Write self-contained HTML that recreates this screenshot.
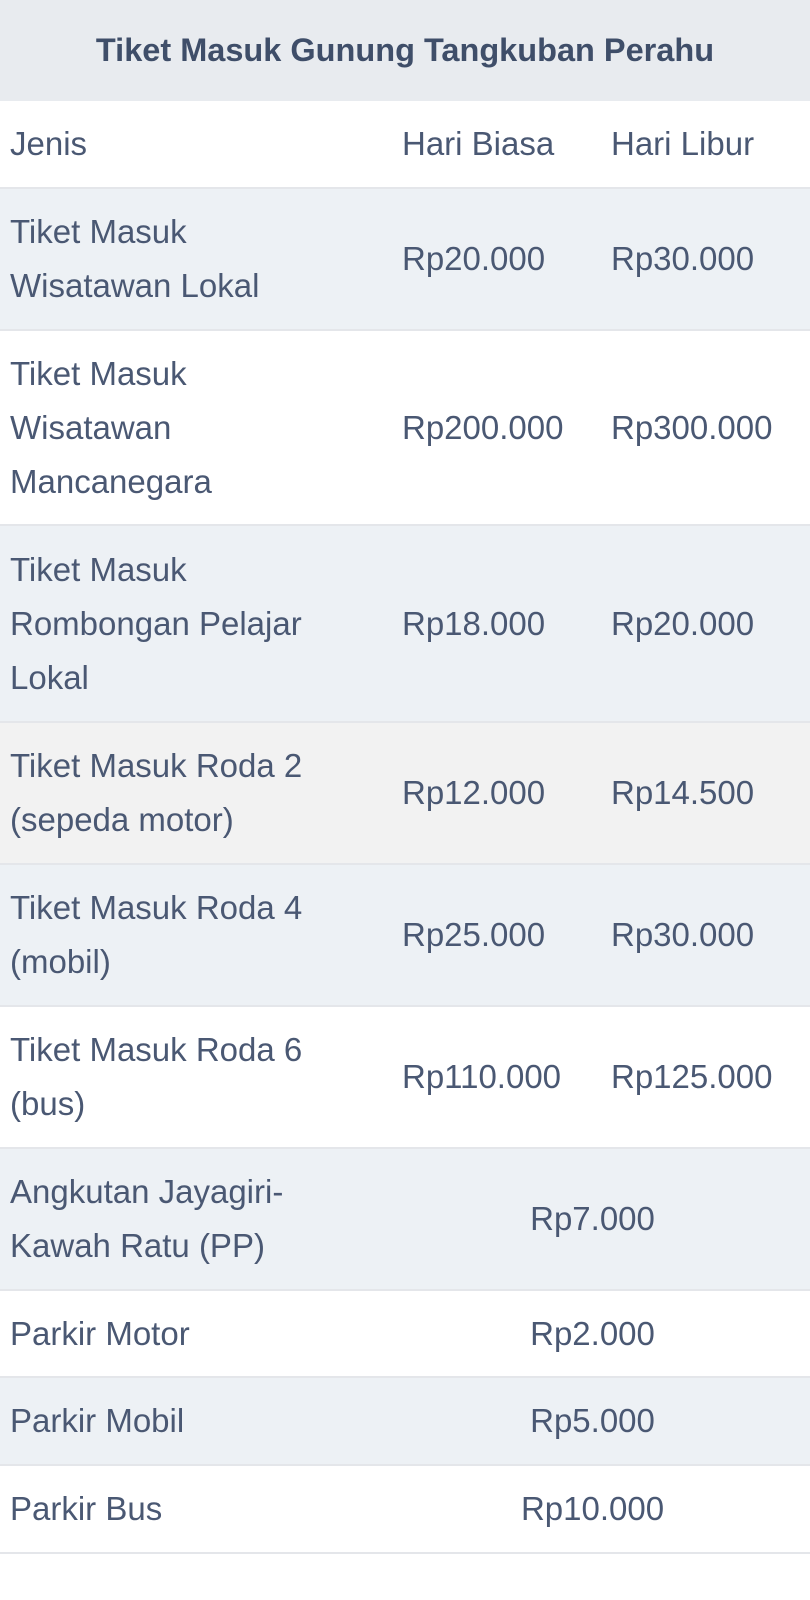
<!DOCTYPE html>
<html><head><meta charset="utf-8"><style>
*{margin:0;padding:0;box-sizing:border-box}
body{width:810px;height:1600px;background:#fff;font-family:"Liberation Sans",sans-serif;color:#4a5873;position:relative;overflow:hidden}
.title{position:absolute;left:0;top:0;width:810px;height:101px;background:#e8ebef;display:flex;align-items:center;justify-content:center;font-weight:bold;font-size:32.5px;color:#3f4e69}
.r{position:absolute;left:0;width:810px;border-bottom:2px solid #e4e6ea;font-size:33px;line-height:54px}
.c{position:absolute;top:0;height:100%;display:flex;align-items:center;white-space:nowrap}
.c1{left:10px;width:330px}
.c2{left:402px}
.c3{left:611px}
.cm{left:400px;width:385px;justify-content:center}
.l{background:#edf1f5}
.g{background:#f2f2f2}
</style></head><body>
<div class="title">Tiket Masuk Gunung Tangkuban Perahu</div>
<div class="r" style="top:101px;height:88px"><div class="c c1">Jenis</div><div class="c c2">Hari Biasa</div><div class="c c3">Hari Libur</div></div>
<div class="r l" style="top:189px;height:142px"><div class="c c1">Tiket Masuk<br>Wisatawan Lokal</div><div class="c c2">Rp20.000</div><div class="c c3">Rp30.000</div></div>
<div class="r" style="top:331px;height:195px"><div class="c c1">Tiket Masuk<br>Wisatawan<br>Mancanegara</div><div class="c c2">Rp200.000</div><div class="c c3">Rp300.000</div></div>
<div class="r l" style="top:526px;height:197px"><div class="c c1">Tiket Masuk<br>Rombongan Pelajar<br>Lokal</div><div class="c c2">Rp18.000</div><div class="c c3">Rp20.000</div></div>
<div class="r g" style="top:723px;height:142px"><div class="c c1">Tiket Masuk Roda 2<br>(sepeda motor)</div><div class="c c2">Rp12.000</div><div class="c c3">Rp14.500</div></div>
<div class="r l" style="top:865px;height:142px"><div class="c c1">Tiket Masuk Roda 4<br>(mobil)</div><div class="c c2">Rp25.000</div><div class="c c3">Rp30.000</div></div>
<div class="r" style="top:1007px;height:142px"><div class="c c1">Tiket Masuk Roda 6<br>(bus)</div><div class="c c2">Rp110.000</div><div class="c c3">Rp125.000</div></div>
<div class="r l" style="top:1149px;height:142px"><div class="c c1">Angkutan Jayagiri-<br>Kawah Ratu (PP)</div><div class="c cm">Rp7.000</div></div>
<div class="r" style="top:1291px;height:87px"><div class="c c1">Parkir Motor</div><div class="c cm">Rp2.000</div></div>
<div class="r l" style="top:1378px;height:88px"><div class="c c1">Parkir Mobil</div><div class="c cm">Rp5.000</div></div>
<div class="r" style="top:1466px;height:88px"><div class="c c1">Parkir Bus</div><div class="c cm">Rp10.000</div></div>
</body></html>
